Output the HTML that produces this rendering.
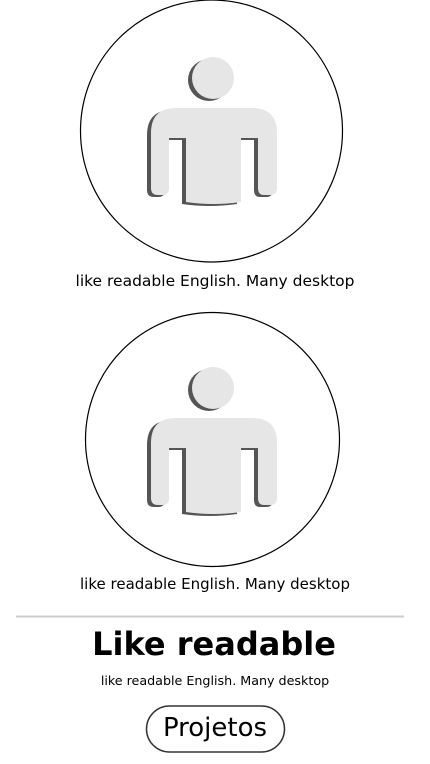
<!DOCTYPE html>
<html><head><meta charset="utf-8"><style>
html,body{margin:0;padding:0;background:#fff;width:430px;height:764px;overflow:hidden;font-family:"DejaVu Sans","Liberation Sans",sans-serif;color:#000}
.t{position:absolute;left:0;width:430px;text-align:center;white-space:nowrap}
</style></head><body>
<svg width="430" height="764" style="position:absolute;left:0;top:0">
<defs>
<g id="p">
<circle cx="209" cy="80" r="21" fill="#555"/>
<circle cx="213" cy="78" r="21" fill="#e6e6e6"/>
<path d="M176 108 H252 Q277 108 277 133 V188 Q277 195 270 195 H264 Q258 195 258 188 V138 H241 V202 Q213 206 186 202 V138 H169 V188 Q169 195 162 195 H158 Q151 195 151 188 V133 Q151 108 176 108 Z" fill="#555" transform="translate(-4,2)"/>
<path d="M176 108 H252 Q277 108 277 133 V188 Q277 195 270 195 H264 Q258 195 258 188 V138 H241 V202 Q213 206 186 202 V138 H169 V188 Q169 195 162 195 H158 Q151 195 151 188 V133 Q151 108 176 108 Z" fill="#e6e6e6"/>
</g>
</defs>
<circle cx="211.5" cy="131" r="131" fill="none" stroke="#000" stroke-width="1.2"/>
<circle cx="212.5" cy="439.5" r="127" fill="none" stroke="#000" stroke-width="1.2"/>
<use href="#p"/>
<use href="#p" transform="translate(0,310)"/>
<line x1="16" y1="616.5" x2="404" y2="616.5" stroke="#ccc" stroke-width="2"/>
<rect x="146.5" y="706" width="138" height="46" rx="23" fill="none" stroke="#333" stroke-width="1.5"/>
</svg>
<div class="t" style="top:272px;font-size:15.5px">like readable English. Many desktop</div>
<div class="t" style="top:575px;font-size:15px">like readable English. Many desktop</div>
<div class="t" style="top:625px;font-size:32px;font-weight:bold;left:-1px">Like readable</div>
<div class="t" style="top:673px;font-size:12.7px">like readable English. Many desktop</div>
<div class="t" style="top:713px;font-size:26px;left:0px">Projetos</div>
</body></html>
